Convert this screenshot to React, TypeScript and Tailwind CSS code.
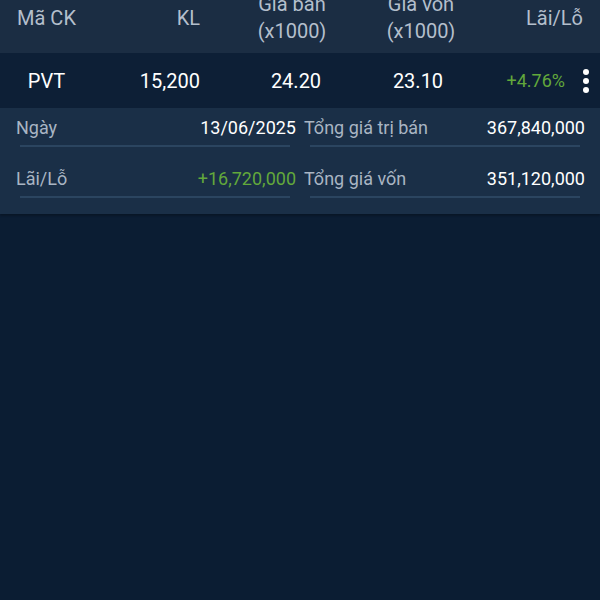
const font = { fontFamily: "Roboto, 'Noto Sans', sans-serif" };

function Dots() {
  return (
    <div className="flex flex-col items-center gap-[3px] w-[12px]">
      <span className="block w-[6px] h-[6px] rounded-full bg-white" />
      <span className="block w-[6px] h-[6px] rounded-full bg-white" />
      <span className="block w-[6px] h-[6px] rounded-full bg-white" />
    </div>
  );
}

function DetailCell({
  label,
  value,
  valueClass,
  side,
  first,
}: {
  label: string;
  value: string;
  valueClass: string;
  side: "left" | "right";
  first?: boolean;
}) {
  return (
    <div className={side === "left" ? "pl-4 pr-1" : "pl-1 pr-[15px]"}>
      <div className={first ? "" : "mt-[18px]"}>
        <div className="flex justify-between items-center h-[26px] text-[18px]">
          <span className="text-[#a9b5c3]">{label}</span>
          <span className={valueClass}>{value}</span>
        </div>
        <div
          className={
            side === "left"
              ? "mt-[5px] h-[2px] bg-[#2b4560] ml-1 mr-[6px]"
              : "mt-[5px] h-[2px] bg-[#2b4560] ml-[6px] mr-[5px]"
          }
        />
      </div>
    </div>
  );
}

export default function App() {
  return (
    <div className="w-[600px] h-[600px] bg-[#0b1d33] overflow-hidden" style={font}>
      {/* Header */}
      <div className="h-[53px] bg-[#1b2d43] flex items-center pb-[17px] overflow-hidden text-[20px] text-[#b4bfcc] leading-[27px]">
        <div className="w-[93px] text-center">Mã CK</div>
        <div className="w-[107px] text-right">KL</div>
        <div className="w-[124px] ml-[30px] text-center">
          Giá bán
          <br />
          (x1000)
        </div>
        <div className="w-[134px] text-center">
          Giá vốn
          <br />
          (x1000)
        </div>
        <div className="w-[95px] text-right">Lãi/Lỗ</div>
      </div>

      {/* Position row */}
      <div className="h-[55px] bg-[#0d1f36] flex items-center text-[20px] text-white">
        <div className="w-[93px] text-center">PVT</div>
        <div className="w-[107px] text-right">15,200</div>
        <div className="w-[192px] text-center">24.20</div>
        <div className="w-[52px] text-center">23.10</div>
        <div className="w-[121px] text-right text-[18px] text-[#62a83b]">+4.76%</div>
        <div className="ml-[15px]">
          <Dots />
        </div>
      </div>

      {/* Details */}
      <div className="bg-[#1a2f47] grid grid-cols-2 pt-[6px] pb-[16px] shadow-[0_2px_2px_rgba(0,0,0,0.25)]">
        <DetailCell label="Ngày" value="13/06/2025" valueClass="text-white" side="left" first />
        <DetailCell label="Tổng giá trị bán" value="367,840,000" valueClass="text-white" side="right" first />
        <DetailCell label="Lãi/Lỗ" value="+16,720,000" valueClass="text-[#62a83b]" side="left" />
        <DetailCell label="Tổng giá vốn" value="351,120,000" valueClass="text-white" side="right" />
      </div>
    </div>
  );
}
